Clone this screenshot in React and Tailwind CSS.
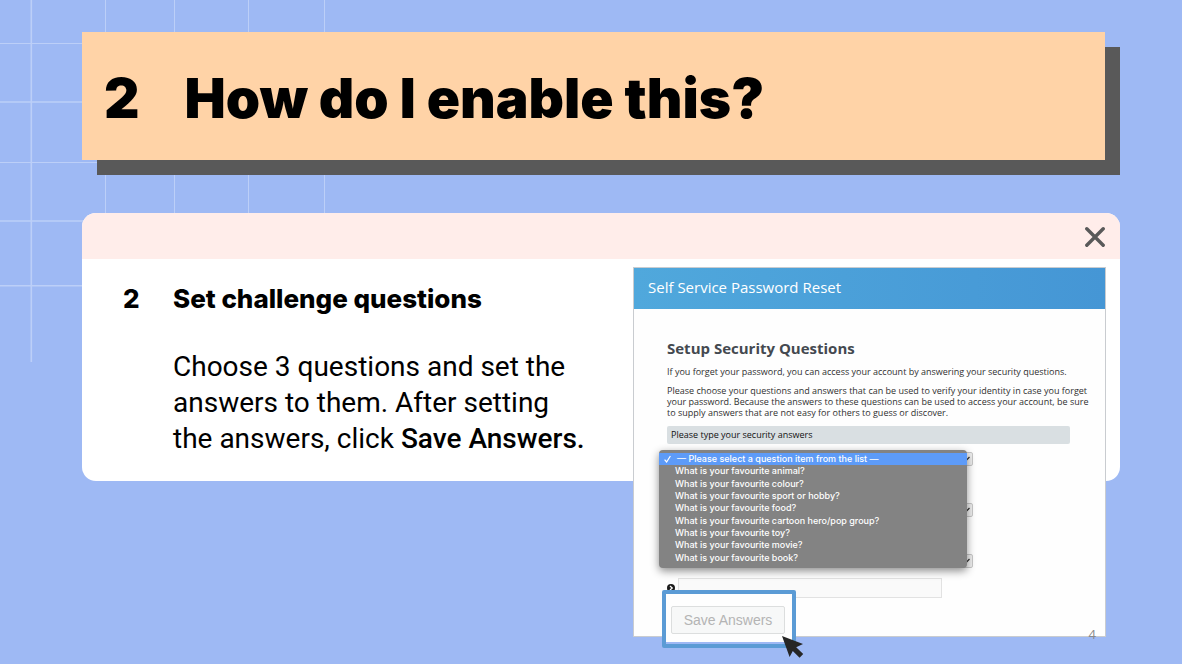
import React from "react";

const QUESTIONS = [
  "What is your favourite animal?",
  "What is your favourite colour?",
  "What is your favourite sport or hobby?",
  "What is your favourite food?",
  "What is your favourite cartoon hero/pop group?",
  "What is your favourite toy?",
  "What is your favourite movie?",
  "What is your favourite book?",
];

function BackgroundGrid() {
  return (
    <svg
      className="absolute top-0 left-0 h-[362px] w-[325px]"
      viewBox="0 0 325 362"
      fill="none"
      stroke="#bccff8"
      aria-hidden="true"
    >
      <path d="M31.3 0V362" strokeWidth="1.6" />
      <path d="M105.5 0V230M174.5 0V230M248.5 0V230M324.5 0V230" />
      <path d="M0 43.5H100M0 162.5H110" />
      <path d="M0 102H100M0 221H100M0 285.7H100" strokeWidth="1.6" />
    </svg>
  );
}

function CloseIcon() {
  return (
    <svg className="size-5" viewBox="0 0 20 20" fill="none" stroke="#595959" strokeWidth="3.4" strokeLinecap="round" aria-hidden="true">
      <path d="M1.8 1.8L18.2 18.2M18.2 1.8L1.8 18.2" />
    </svg>
  );
}

function BulletIcon() {
  return (
    <svg className="size-2 shrink-0" viewBox="0 0 8 8" aria-hidden="true">
      <circle cx="4" cy="4" r="4" fill="#1c1c1c" />
      <path d="M3 2L5.2 4L3 6" fill="none" stroke="#fff" strokeWidth="1.3" />
    </svg>
  );
}

function CursorIcon() {
  return (
    <svg className="absolute -right-3 -bottom-[14px] h-[22px] w-[22px]" viewBox="0 0 22 22" aria-hidden="true">
      <path d="M0 0L21 8L14.2 11.2L21.2 18L17.6 21.8L10.8 14.9L7.6 21Z" fill="#262626" />
    </svg>
  );
}

function AnswerGroup({ index }) {
  return (
    <div className="flex flex-col">
      <div className="relative h-[14px] w-[306px]">
        <select
          aria-label={`Security question ${index}`}
          className="block h-full w-full appearance-none rounded-[2px] border border-[#c8c8c8] bg-[#efefef]"
        />
        <svg className="pointer-events-none absolute top-1 right-[3px] h-[6px] w-[8px]" viewBox="0 0 8 6" fill="none" stroke="#333" strokeWidth="1.3" aria-hidden="true">
          <path d="M0.5 1L4 4.6L7.5 1" />
        </svg>
      </div>
      <div className="mt-[10px] flex h-5 w-[275px] items-center gap-[3px]">
        <BulletIcon />
        <input
          type="text"
          aria-label={`Answer ${index}`}
          className="h-full min-w-0 flex-1 border border-[#e2e2e2] bg-[#fafafa]"
        />
      </div>
    </div>
  );
}

function QuestionMenu() {
  return (
    <ul
      role="listbox"
      aria-label="Security question"
      className="absolute -top-[2px] -left-2 flex h-[118px] w-[308px] flex-col rounded-[4px] bg-[#838383] pt-[3px] pb-1 font-['Inter',sans-serif] text-[9px] leading-3 font-medium text-white shadow-[0_3px_9px_rgba(0,0,0,0.45)]"
    >
      <li role="option" aria-selected="true" className="flex flex-1 items-center gap-[6px] bg-[#5d9bf8] pl-[5px]">
        <svg className="h-2 w-[7px]" viewBox="0 0 7 8" fill="none" stroke="#fff" strokeWidth="1.2" aria-hidden="true">
          <path d="M0.6 4.6L2.6 7L6.4 1" />
        </svg>
        — Please select a question item from the list —
      </li>
      {QUESTIONS.map((question) => (
        <li key={question} role="option" aria-selected="false" className="flex flex-1 items-center pl-4">
          {question}
        </li>
      ))}
    </ul>
  );
}

function PasswordResetPanel() {
  return (
    <section className="relative h-[370px] w-[473px] shrink-0 border border-[#c9ccd0] bg-[#fefefe] font-['Open_Sans',sans-serif] text-[#303030]">
      <header className="flex h-[41px] items-center bg-linear-to-r from-[#50a8dc] to-[#4596d5] pb-1 pl-[14px] text-[15px] leading-5 text-white">
        Self Service Password Reset
      </header>
      <div className="pt-[29px] pl-[33px]">
        <h3 className="text-[15px] leading-5 font-bold text-[#444950]">Setup Security Questions</h3>
        <p className="mt-2 text-[9px] leading-[11px] whitespace-nowrap">
          If you forget your password, you can access your account by answering your security questions.
        </p>
        <p className="mt-2 text-[9px] leading-[11px] whitespace-nowrap">
          Please choose your questions and answers that can be used to verify your identity in case you forget
          <br />
          your password. Because the answers to these questions can be used to access your account, be sure
          <br />
          to supply answers that are not easy for others to guess or discover.
        </p>
        <div className="mt-2 flex h-[18px] w-[403px] items-center rounded-[2px] bg-[#d9dfe2] pl-1 text-[9px] font-medium text-[#111]">
          Please type your security answers
        </div>
        <div className="relative mt-2 flex flex-col gap-[7px]">
          <AnswerGroup index={1} />
          <AnswerGroup index={2} />
          <AnswerGroup index={3} />
          <QuestionMenu />
        </div>
      </div>
      <div className="absolute top-[322px] left-7 h-[58px] w-[134px] rounded-[2px] border-4 border-[#5b9bd5] bg-[#9eb8f4]">
        <div className="flex h-12 items-end bg-[#fefefe] pb-2 pl-[5px]">
          <button
            type="button"
            className="h-7 w-[114px] rounded-[2px] border border-[#dcdede] bg-[#f7f8f8] font-['Liberation_Sans',sans-serif] text-[14px] leading-5 text-[#b4b4b4]"
          >
            Save Answers
          </button>
        </div>
        <CursorIcon />
      </div>
      <span className="absolute right-[9px] -bottom-2 text-[13px] leading-5 text-[#8a8a8a]">4</span>
    </section>
  );
}

export default function App() {
  return (
    <main className="relative min-h-screen overflow-hidden bg-[#9eb9f4] pt-8 pr-[62px] pl-[82px] font-['Inter',sans-serif] text-black">
      <BackgroundGrid />
      <header className="relative mr-[15px] flex h-32 items-center gap-[45px] bg-[#ffd3a7] pt-1 pl-[22px] text-[55px] leading-none font-black shadow-[15px_15px_0_#595959]">
        <span>2</span>
        <h1>How do I enable this?</h1>
      </header>
      <section className="relative mt-[53px] h-[268px] rounded-[14px] bg-white">
        <div className="flex h-[46px] items-center justify-end rounded-t-[14px] bg-[#ffedea] pt-px pr-[15px]">
          <button type="button" aria-label="Close">
            <CloseIcon />
          </button>
        </div>
        <div className="flex items-start justify-between pt-2 pr-[14px] pl-[41px]">
          <div className="flex gap-8 pt-[14px] text-[26px] leading-9">
            <span className="w-[18px] font-extrabold">2</span>
            <div>
              <h2 className="font-extrabold">Set challenge questions</h2>
              <p className="mt-8 font-['Roboto',sans-serif] text-[28px] whitespace-nowrap">
                Choose 3 questions and set the
                <br />
                answers to them. After setting
                <br />
                the answers, click <strong className="font-medium">Save Answers.</strong>
              </p>
            </div>
          </div>
          <PasswordResetPanel />
        </div>
      </section>
    </main>
  );
}
